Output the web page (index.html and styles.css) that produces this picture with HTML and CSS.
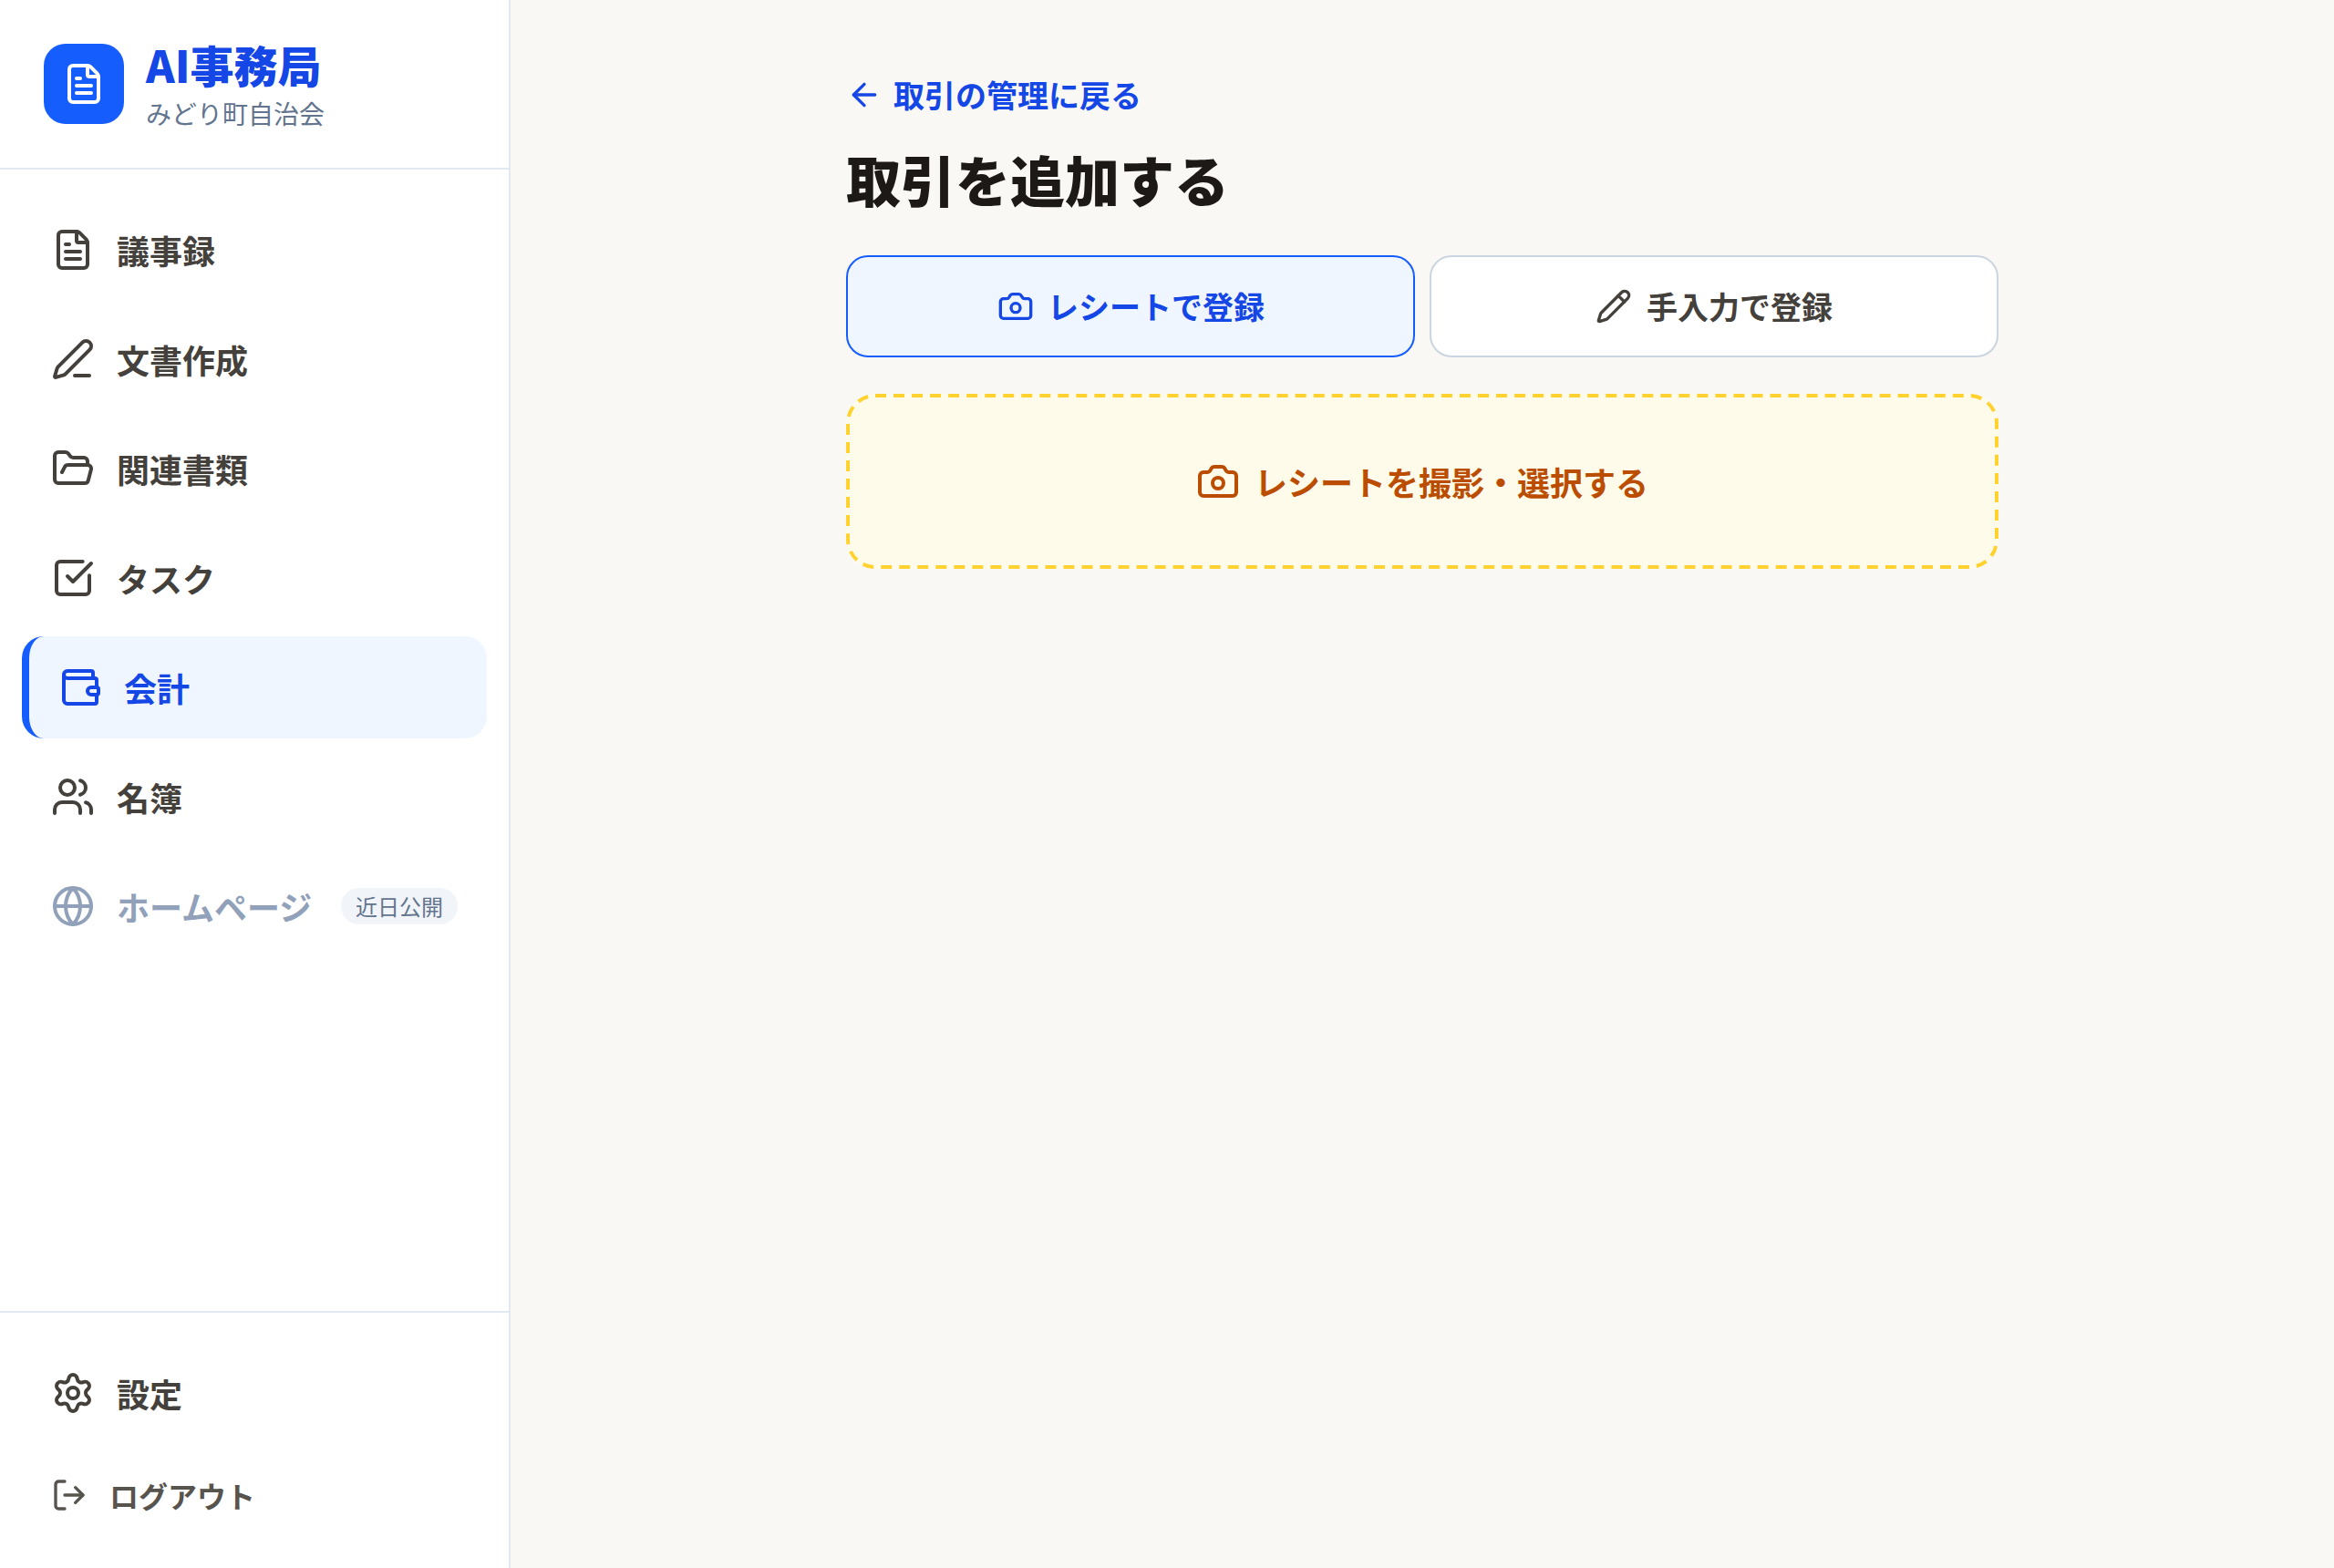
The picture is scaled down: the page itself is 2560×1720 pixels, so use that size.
FILE: index.html
```html
<!DOCTYPE html>
<html lang="ja">
<head>
  <meta charset="UTF-8">
  <title>取引を追加する | AI事務局</title>
  <meta name="viewport" content="width=device-width, initial-scale=1.0">
  <link rel="stylesheet" href="styles.css">
</head>
<body>
  <aside class="sidebar">
    <div class="brand">
      <div class="brand-logo">
        <svg class="icon" viewBox="0 0 24 24"><path d="M6 22a2 2 0 0 1-2-2V4a2 2 0 0 1 2-2h8a2.4 2.4 0 0 1 1.704.706l3.588 3.588A2.4 2.4 0 0 1 20 8v12a2 2 0 0 1-2 2z"/><path d="M14 2v5a1 1 0 0 0 1 1h5"/><path d="M10 9H8"/><path d="M16 13H8"/><path d="M16 17H8"/></svg>
      </div>
      <div class="brand-text">
        <div class="brand-name">AI事務局</div>
        <div class="brand-org">みどり町自治会</div>
      </div>
    </div>

    <nav class="nav">
      <a class="nav-item">
        <svg class="icon" viewBox="0 0 24 24"><path d="M6 22a2 2 0 0 1-2-2V4a2 2 0 0 1 2-2h8a2.4 2.4 0 0 1 1.704.706l3.588 3.588A2.4 2.4 0 0 1 20 8v12a2 2 0 0 1-2 2z"/><path d="M14 2v5a1 1 0 0 0 1 1h5"/><path d="M10 9H8"/><path d="M16 13H8"/><path d="M16 17H8"/></svg>
        <span>議事録</span>
      </a>
      <a class="nav-item">
        <svg class="icon" viewBox="0 0 24 24"><path d="M13 21h8"/><path d="M21.174 6.812a1 1 0 0 0-3.986-3.987L3.842 16.174a2 2 0 0 0-.5.83l-1.321 4.352a.5.5 0 0 0 .623.622l4.353-1.32a2 2 0 0 0 .83-.497z"/></svg>
        <span>文書作成</span>
      </a>
      <a class="nav-item">
        <svg class="icon" viewBox="0 0 24 24"><path d="m6 14 1.5-2.9A2 2 0 0 1 9.24 10H20a2 2 0 0 1 1.94 2.5l-1.54 6a2 2 0 0 1-1.95 1.5H4a2 2 0 0 1-2-2V5a2 2 0 0 1 2-2h3.9a2 2 0 0 1 1.69.9l.81 1.2a2 2 0 0 0 1.67.9H18a2 2 0 0 1 2 2v2"/></svg>
        <span>関連書類</span>
      </a>
      <a class="nav-item">
        <svg class="icon" viewBox="0 0 24 24"><path d="M21 10.656V19a2 2 0 0 1-2 2H5a2 2 0 0 1-2-2V5a2 2 0 0 1 2-2h12.344"/><path d="m9 11 3 3L22 4"/></svg>
        <span>タスク</span>
      </a>
      <a class="nav-item active">
        <svg class="icon" viewBox="0 0 24 24"><path d="M19 7V4a1 1 0 0 0-1-1H5a2 2 0 0 0 0 4h15a1 1 0 0 1 1 1v4h-3a2 2 0 0 0 0 4h3a1 1 0 0 0 1-1v-2a1 1 0 0 0-1-1"/><path d="M3 5v14a2 2 0 0 0 2 2h15a1 1 0 0 0 1-1v-4"/></svg>
        <span>会計</span>
      </a>
      <a class="nav-item">
        <svg class="icon" viewBox="0 0 24 24"><path d="M16 21v-2a4 4 0 0 0-4-4H6a4 4 0 0 0-4 4v2"/><path d="M16 3.128a4 4 0 0 1 0 7.744"/><path d="M22 21v-2a4 4 0 0 0-3-3.87"/><circle cx="9" cy="7" r="4"/></svg>
        <span>名簿</span>
      </a>
      <div class="nav-item disabled">
        <svg class="icon" viewBox="0 0 24 24"><circle cx="12" cy="12" r="10"/><path d="M12 2a14.5 14.5 0 0 0 0 20 14.5 14.5 0 0 0 0-20"/><path d="M2 12h20"/></svg>
        <span>ホームページ</span>
        <span class="badge">近日公開</span>
      </div>
    </nav>

    <div class="sidebar-footer">
      <a class="nav-item">
        <svg class="icon" viewBox="0 0 24 24"><path d="M9.671 4.136a2.34 2.34 0 0 1 4.659 0 2.34 2.34 0 0 0 3.319 1.915 2.34 2.34 0 0 1 2.33 4.033 2.34 2.34 0 0 0 0 3.831 2.34 2.34 0 0 1-2.33 4.033 2.34 2.34 0 0 0-3.319 1.915 2.34 2.34 0 0 1-4.659 0 2.34 2.34 0 0 0-3.32-1.915 2.34 2.34 0 0 1-2.33-4.033 2.34 2.34 0 0 0 0-3.831A2.34 2.34 0 0 1 6.35 6.051a2.34 2.34 0 0 0 3.319-1.915"/><circle cx="12" cy="12" r="3"/></svg>
        <span>設定</span>
      </a>
      <button class="nav-item logout">
        <svg class="icon icon-sm" viewBox="0 0 24 24"><path d="m16 17 5-5-5-5"/><path d="M21 12H9"/><path d="M9 21H5a2 2 0 0 1-2-2V5a2 2 0 0 1 2-2h4"/></svg>
        <span>ログアウト</span>
      </button>
    </div>
  </aside>

  <main class="main">
    <div class="content">
      <a class="back-link">
        <svg class="icon icon-sm" viewBox="0 0 24 24"><path d="m12 19-7-7 7-7"/><path d="M19 12H5"/></svg>
        <span>取引の管理に戻る</span>
      </a>
      <h1>取引を追加する</h1>

      <div class="tabs">
        <button class="tab selected">
          <svg class="icon icon-sm" viewBox="0 0 24 24"><path d="M13.997 4a2 2 0 0 1 1.76 1.05l.486.9A2 2 0 0 0 18.003 7H20a2 2 0 0 1 2 2v9a2 2 0 0 1-2 2H4a2 2 0 0 1-2-2V9a2 2 0 0 1 2-2h1.997a2 2 0 0 0 1.759-1.048l.489-.904A2 2 0 0 1 10.004 4z"/><circle cx="12" cy="13" r="3"/></svg>
          <span>レシートで登録</span>
        </button>
        <button class="tab">
          <svg class="icon icon-sm" viewBox="0 0 24 24"><path d="M21.174 6.812a1 1 0 0 0-3.986-3.987L3.842 16.174a2 2 0 0 0-.5.83l-1.321 4.352a.5.5 0 0 0 .623.622l4.353-1.32a2 2 0 0 0 .83-.497z"/><path d="m15 5 4 4"/></svg>
          <span>手入力で登録</span>
        </button>
      </div>

      <button class="upload">
        <svg class="upload-outline" viewBox="0 0 1264 192"><rect x="2" y="2" width="1260" height="188" rx="30"/></svg>
        <svg class="icon" viewBox="0 0 24 24"><path d="M13.997 4a2 2 0 0 1 1.76 1.05l.486.9A2 2 0 0 0 18.003 7H20a2 2 0 0 1 2 2v9a2 2 0 0 1-2 2H4a2 2 0 0 1-2-2V9a2 2 0 0 1 2-2h1.997a2 2 0 0 0 1.759-1.048l.489-.904A2 2 0 0 1 10.004 4z"/><circle cx="12" cy="13" r="3"/></svg>
        <span>レシートを撮影・選択する</span>
      </button>
    </div>
  </main>
</body>
</html>
```
FILE: styles.css
```css
* {
  box-sizing: border-box;
}

body {
  margin: 0;
  display: flex;
  height: 100vh;
  background: #f9f8f4;
  color: #1c1917;
  font-family: "Noto Sans CJK JP", sans-serif;
}

button {
  font-family: inherit;
  cursor: pointer;
}

.icon {
  width: 48px;
  height: 48px;
  flex-shrink: 0;
  fill: none;
  stroke: currentColor;
  stroke-width: 2;
  stroke-linecap: round;
  stroke-linejoin: round;
}

.icon-sm {
  width: 40px;
  height: 40px;
}

/* sidebar */
.sidebar {
  width: 560px;
  flex-shrink: 0;
  display: flex;
  flex-direction: column;
  background: #fff;
  border-right: 2px solid #e2e8f0;
}

.brand {
  display: flex;
  align-items: center;
  gap: 24px;
  height: 186px;
  padding: 0 48px;
  border-bottom: 2px solid #e2e8f0;
}

.brand-logo {
  display: flex;
  align-items: center;
  justify-content: center;
  width: 88px;
  height: 88px;
  border-radius: 24px;
  background: #155dfc;
  color: #fff;
}

.brand-text {
  padding-top: 1px;
}

.brand-name {
  margin-bottom: 3px;
  font-size: 48px;
  font-weight: 800;
  line-height: 60px;
  color: #1447e6;
}

.brand-org {
  font-size: 28px;
  line-height: 42px;
  color: #62748e;
}

.nav {
  flex: 1;
  display: flex;
  flex-direction: column;
  gap: 8px;
  padding: 32px 24px;
}

.nav-item {
  display: flex;
  align-items: center;
  gap: 24px;
  height: 112px;
  padding: 0 32px;
  border: none;
  border-radius: 24px;
  background: none;
  font-size: 36px;
  font-weight: 700;
  color: #44403b;
}

.nav-item.active {
  border-left: 8px solid #155dfc;
  background: #eff6ff;
  color: #1447e6;
}

.nav-item.disabled {
  color: #90a1b9;
}

.badge {
  margin-left: auto;
  padding: 0 16px;
  border-radius: 20px;
  background: #f1f5f9;
  color: #62748e;
  font-size: 24px;
  font-weight: 400;
  line-height: 40px;
}

.sidebar-footer {
  display: flex;
  flex-direction: column;
  gap: 8px;
  padding: 32px 24px;
  border-top: 2px solid #e2e8f0;
}

.nav-item.logout {
  height: 96px;
  font-size: 32px;
  color: #57534d;
}

/* main */
.main {
  flex: 1;
  padding-top: 60px;
}

.content {
  width: 1264px;
  margin: 0 auto;
}

.back-link {
  display: flex;
  align-items: center;
  gap: 12px;
  height: 88px;
  font-size: 34px;
  font-weight: 700;
  color: #1447e6;
}

.back-link span,
.tab span {
  padding-bottom: 2px;
}

h1 {
  margin: 8px 0 44px;
  font-size: 60px;
  font-weight: 800;
  line-height: 80px;
}

.tabs {
  display: grid;
  grid-template-columns: 1fr 1fr;
  gap: 16px;
  margin-bottom: 40px;
}

.tab {
  display: flex;
  align-items: center;
  justify-content: center;
  gap: 16px;
  height: 112px;
  border: 2px solid #cad5e2;
  border-radius: 24px;
  background: #fff;
  font-size: 34px;
  font-weight: 700;
  color: #44403b;
}

.tab.selected {
  border-color: #155dfc;
  background: #eff6ff;
  color: #1447e6;
}

.tab.selected .icon {
  margin: 0 -1px 0 1px;
}

.upload {
  position: relative;
  display: flex;
  align-items: center;
  justify-content: center;
  gap: 16px;
  width: 100%;
  height: 192px;
  border: none;
  border-radius: 32px;
  background: #fffbeb;
  font-size: 36px;
  font-weight: 700;
  color: #bb4d00;
}

/* dashed outline, drawn over the button edge */
.upload-outline {
  position: absolute;
  inset: 0;
  width: 100%;
  height: 100%;
  fill: none;
  stroke: #ffd230;
  stroke-width: 4;
  stroke-dasharray: 12 8.03;
}
```
